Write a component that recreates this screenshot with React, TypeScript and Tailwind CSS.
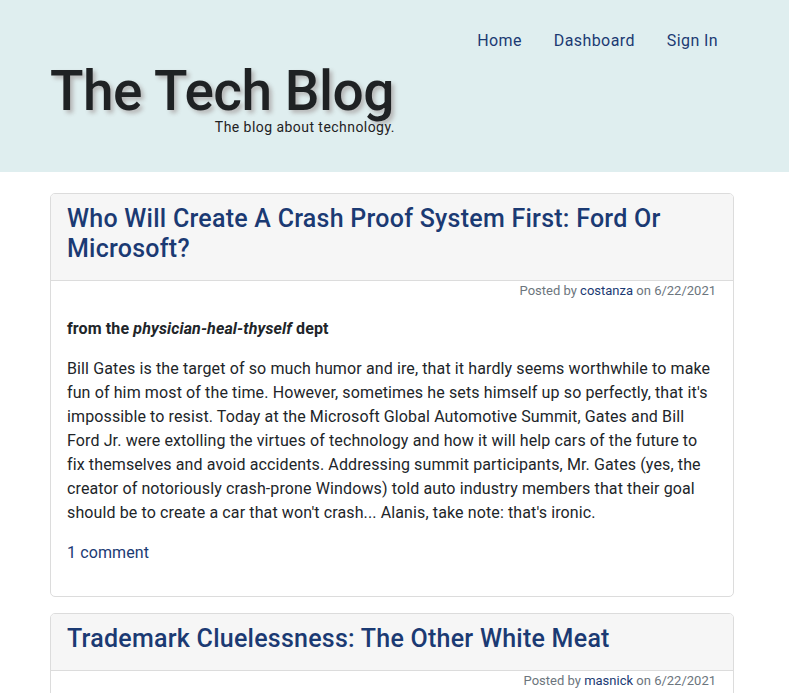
import React from "react";

interface Post {
  id: number;
  title: string;
  author: string;
  date: string;
  dept?: string;
  body?: string;
  comments?: number;
}

const posts: Post[] = [
  {
    id: 1,
    title: "Who Will Create A Crash Proof System First: Ford Or Microsoft?",
    author: "costanza",
    date: "6/22/2021",
    dept: "physician-heal-thyself",
    body: "Bill Gates is the target of so much humor and ire, that it hardly seems worthwhile to make fun of him most of the time. However, sometimes he sets himself up so perfectly, that it's impossible to resist. Today at the Microsoft Global Automotive Summit, Gates and Bill Ford Jr. were extolling the virtues of technology and how it will help cars of the future to fix themselves and avoid accidents. Addressing summit participants, Mr. Gates (yes, the creator of notoriously crash-prone Windows) told auto industry members that their goal should be to create a car that won't crash... Alanis, take note: that's ironic.",
    comments: 1,
  },
  {
    id: 2,
    title: "Trademark Cluelessness: The Other White Meat",
    author: "masnick",
    date: "6/22/2021",
  },
];

function PostCard({ post }: { post: Post }) {
  return (
    <article className="mb-4 border border-[#dcdcdc] rounded-[5px] bg-white overflow-hidden">
      <div className="bg-[#f6f6f6] px-4 pt-[10px] pb-2 border-b border-[#dcdcdc]">
        <h2 className="mb-2 text-[25px] leading-[30px] font-medium tracking-[0.25px] text-[#1b3a73]">
          {post.title}
        </h2>
      </div>
      <div className="text-right pr-[17px] text-[13px] leading-[20px] text-[#6c757d]">
        Posted by <span className="text-[#1b3a73]">{post.author}</span> on{" "}
        {post.date}
      </div>
      {post.body && (
        <div className="px-4 pt-4 pb-[31px] text-[16px] leading-6 tracking-[0.12px] text-[#212529]">
          <p className="font-bold mb-4">
            from the <i>{post.dept}</i> dept
          </p>
          <p className="mb-4">{post.body}</p>
          <a className="text-[#1b3a73]">
            {post.comments} comment{post.comments === 1 ? "" : "s"}
          </a>
        </div>
      )}
      {!post.body && <div className="h-6" />}
    </article>
  );
}

export default function App() {
  return (
    <div className="min-h-screen bg-white font-['Roboto',sans-serif] text-[#212529]">
      <header className="bg-[#dfeeef] h-[172px] pl-[50px] pr-[55px] pt-[29px]">
        <nav className="flex justify-end">
          {["Home", "Dashboard", "Sign In"].map((item) => (
            <a
              key={item}
              className="px-4 text-[16px] leading-6 tracking-[0.4px] text-[#1b3a73]"
            >
              {item}
            </a>
          ))}
        </nav>
        <div className="inline-flex flex-col items-end mt-[12px]">
          <h1 className="text-[55px] leading-[52px] font-medium tracking-[-0.5px] text-[#1f2224] [text-shadow:3px_3px_4px_#b5b5b5]">
            The Tech Blog
          </h1>
          <p className="text-[14px] leading-5 -mr-[1px] tracking-[0.45px] text-[#1f2224]">
            The blog about technology.
          </p>
        </div>
      </header>
      <main className="pl-[50px] pr-[55px] pt-[21px]">
        {posts.map((post) => (
          <PostCard key={post.id} post={post} />
        ))}
      </main>
    </div>
  );
}
